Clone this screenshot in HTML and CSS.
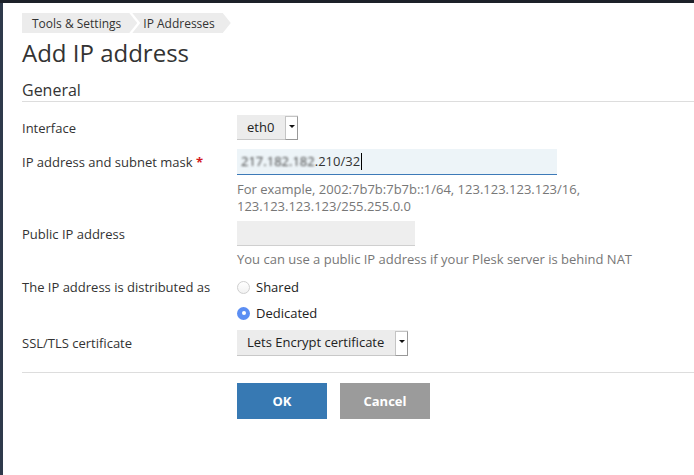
FILE: index.html
```html
<!DOCTYPE html>
<html lang="en">
<head>
<meta charset="utf-8">
<title>Add IP address</title>
<link rel="stylesheet" href="styles.css">
</head>
<body>
<div class="topbar"></div>
<div class="shell">
  <div class="sidebar"></div>
  <main class="page">
    <nav class="breadcrumbs">
      <span class="crumb crumb-first">Tools &amp; Settings</span>
      <span class="crumb crumb-next">IP Addresses</span>
    </nav>
    <h1 class="page-title">Add IP address</h1>
    <h2 class="section-title">General</h2>

    <div class="form">
      <div class="row row-25">
        <div class="label">Interface</div>
        <div class="field">
          <div class="select select-eth">
            <span class="select-value">eth0</span>
            <span class="select-arrow"><span class="tri"></span></span>
          </div>
        </div>
      </div>

      <div class="row row-ip">
        <div class="label label-26">IP address and subnet mask <span class="req">*</span></div>
        <div class="field">
          <div class="input input-ip"><span class="blur">217.182.182</span>.210/32<span class="caret"></span></div>
          <div class="hint hint-2">For example, 2002:7b7b:7b7b::1/64, 123.123.123.123/16,<br>123.123.123.123/255.255.0.0</div>
        </div>
      </div>

      <div class="row row-pub">
        <div class="label label-25">Public IP address</div>
        <div class="field">
          <div class="input input-pub"></div>
          <div class="hint hint-1">You can use a public IP address if your Plesk server is behind NAT</div>
        </div>
      </div>

      <div class="row row-radio">
        <div class="label label-26">The IP address is distributed as</div>
        <div class="field">
          <div class="radio-line"><span class="radio"></span>Shared</div>
          <div class="radio-line"><span class="radio radio-on"></span>Dedicated</div>
        </div>
      </div>

      <div class="row row-ssl">
        <div class="label label-ssl">SSL/TLS certificate</div>
        <div class="field">
          <div class="select select-ssl">
            <span class="select-value">Lets Encrypt certificate</span>
            <span class="select-arrow"><span class="tri"></span></span>
          </div>
        </div>
      </div>
    </div>

    <div class="actions">
      <div class="actions-spacer"></div>
      <div class="buttons">
        <button class="btn btn-ok" type="button">OK</button>
        <button class="btn btn-cancel" type="button">Cancel</button>
      </div>
    </div>
  </main>
</div>
</body>
</html>
```

FILE: styles.css
```css
html, body {
  margin: 0;
  padding: 0;
  height: 100%;
}
body {
  background: #2c3645;
  font-family: "Open Sans", "Liberation Sans", sans-serif;
  color: #333;
  overflow: hidden;
}
.topbar {
  height: 3px;
  background: #1c2129;
}
.shell {
  display: flex;
  height: calc(100% - 3px);
}
.sidebar {
  width: 3px;
  flex: none;
  background: #2e3a4b;
}
.page {
  flex: 1;
  background: #fff;
  padding: 10px 0 0 19px;
}

/* breadcrumbs */
.breadcrumbs {
  display: flex;
  height: 20px;
}
.crumb {
  display: flex;
  align-items: center;
  height: 20px;
  background: #ececec;
  font-size: 12px;
  color: #333;
}
.crumb-first {
  padding: 0 16px 0 10px;
  clip-path: polygon(0 0, calc(100% - 8px) 0, 100% 50%, calc(100% - 8px) 100%, 0 100%);
}
.crumb-next {
  margin-left: -5px;
  padding: 0 16px 0 11px;
  clip-path: polygon(0 0, calc(100% - 8px) 0, 100% 50%, calc(100% - 8px) 100%, 0 100%, 8px 50%);
}

.page-title {
  margin: 5px 0 0;
  font-size: 24px;
  line-height: 30px;
  font-weight: 400;
  color: #333;
}
.section-title {
  margin: 11px 0 0;
  font-size: 16px;
  line-height: 22px;
  font-weight: 400;
  color: #333;
  border-bottom: 1px solid #ddd;
}

/* form */
.form {
  margin-top: 13px;
}
.row {
  display: grid;
  grid-template-columns: 215px 1fr;
  font-size: 13px;
}
.row-25 { margin-bottom: 8px; }
.row-ip { margin-bottom: 6px; }
.row-pub { margin-bottom: 6px; }
.row-radio { margin-bottom: 4px; }
.label {
  line-height: 25px;
  padding-top: 1px;
  color: #333;
}
.label-25 { line-height: 26px; padding-top: 0; }
.label-26 { line-height: 27px; padding-top: 0; }
.label-ssl { line-height: 25px; padding-top: 1px; }
.req { color: #d4191f; font-weight: 700; }
.field {
  display: flex;
  flex-direction: column;
  align-items: flex-start;
}

.select {
  display: flex;
  height: 25px;
  box-sizing: border-box;
  background: #ececec;
  border-bottom: 1px solid #c8c8c8;
  font-size: 13px;
  color: #222;
}
.select-ssl { height: 26px; }
.select-value {
  line-height: 24px;
  padding: 0 11px 0 10px;
}
.select-arrow {
  display: flex;
  justify-content: center;
  width: 11px;
  margin: 1px 0 -1px;
  background: #fff;
  border: 1px solid #c4c4c4;
  border-right-color: #999;
  border-bottom-color: #999;
}
.tri {
  margin-top: 8px;
  width: 0;
  height: 0;
  border-left: 3px solid transparent;
  border-right: 3px solid transparent;
  border-top: 3px solid #111;
}

.input {
  box-sizing: border-box;
  font-size: 13px;
  color: #333;
}
.input-ip {
  width: 320px;
  height: 26px;
  background: #edf4f8;
  border-bottom: 1px solid #3d7ab8;
  padding-left: 4px;
  line-height: 25px;
  display: flex;
  align-items: center;
}
.blur {
  filter: blur(1px);
  color: #444;
}
.caret {
  display: inline-block;
  width: 1px;
  height: 17px;
  background: #000;
  margin-left: 1px;
}
.input-pub {
  width: 178px;
  height: 25px;
  background: #eeeeee;
  border-bottom: 1px solid #cfcfcf;
}
.hint {
  font-size: 13px;
  line-height: 17px;
  color: #777;
}
.hint-2 { margin-top: 6px; }
.hint-1 { margin-top: 5px; }

.radio-line {
  display: flex;
  align-items: center;
  height: 26px;
  font-size: 13px;
  color: #222;
}
.radio {
  width: 13px;
  height: 13px;
  box-sizing: border-box;
  border-radius: 50%;
  border: 1px solid #cfcfcf;
  background: linear-gradient(#fff, #f2f2f2);
  margin-right: 6px;
  display: flex;
  align-items: center;
  justify-content: center;
}
.radio-on {
  border: none;
  background: #5b8ef3;
}
.radio-on::after {
  content: "";
  width: 4px;
  height: 4px;
  border-radius: 50%;
  background: #fff;
}

/* actions */
.actions {
  margin-top: 16px;
  border-top: 1px solid #ddd;
  display: grid;
  grid-template-columns: 215px 1fr;
  padding-top: 10px;
}
.buttons {
  display: flex;
  gap: 13px;
}
.btn {
  width: 90px;
  height: 36px;
  border: none;
  color: #fff;
  font-family: "Open Sans", "Liberation Sans", sans-serif;
  font-size: 13px;
  font-weight: 700;
  padding: 0;
}
.btn-ok { background: #3779b3; }
.btn-cancel { background: #9b9b9b; }
```
